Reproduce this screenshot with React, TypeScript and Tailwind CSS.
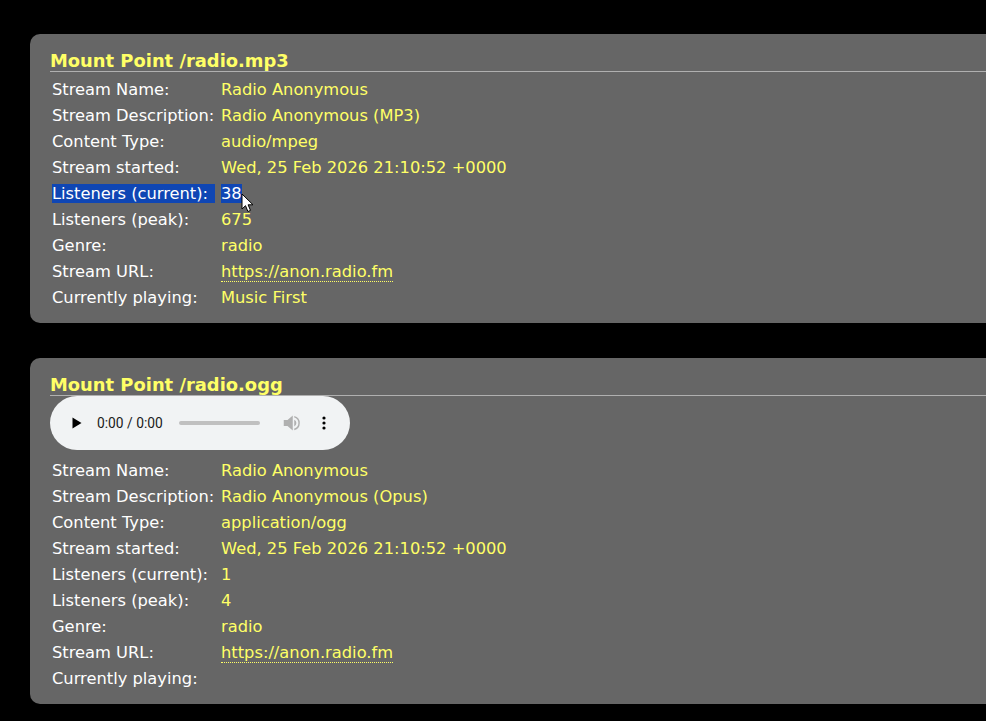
const mp3Rows = [
  ['Stream Name:', 'Radio Anonymous'],
  ['Stream Description:', 'Radio Anonymous (MP3)'],
  ['Content Type:', 'audio/mpeg'],
  ['Stream started:', 'Wed, 25 Feb 2026 21:10:52 +0000'],
  ['Listeners (current):', '38'],
  ['Listeners (peak):', '675'],
  ['Genre:', 'radio'],
  ['Stream URL:', 'https://anon.radio.fm'],
  ['Currently playing:', 'Music First'],
];

const oggRows = [
  ['Stream Name:', 'Radio Anonymous'],
  ['Stream Description:', 'Radio Anonymous (Opus)'],
  ['Content Type:', 'application/ogg'],
  ['Stream started:', 'Wed, 25 Feb 2026 21:10:52 +0000'],
  ['Listeners (current):', '1'],
  ['Listeners (peak):', '4'],
  ['Genre:', 'radio'],
  ['Stream URL:', 'https://anon.radio.fm'],
  ['Currently playing:', ''],
];

function Cursor() {
  return (
    <svg className="absolute left-[20px] top-[9px]" width="14" height="21" viewBox="0 0 14 21">
      <path d="M1 1v15l3.5-3.3 2.4 5.8 2.6-1.1-2.4-5.6H12z" fill="#fff" stroke="#000" strokeWidth="1" />
    </svg>
  );
}

function Row({ label, value, selected }: { label: string; value: string; selected?: boolean }) {
  const isLink = value.startsWith('https');
  return (
    <div className="flex h-[26px] items-center">
      <div className={`ml-[2px] h-[19px] w-[163px] leading-[19px] text-white ${selected ? 'bg-[#0f46b4]' : ''}`}>{label}</div>
      <div className="relative ml-[6px] leading-[19px] text-[#ffff66]">
        {isLink ? (
          <a className="border-b border-dotted border-[#ffff66]">{value}</a>
        ) : (
          <span className={selected ? 'inline-block h-[19px] bg-[#0f46b4] text-white' : ''}>{value}</span>
        )}
        {selected && <Cursor />}
      </div>
    </div>
  );
}

function Player() {
  return (
    <div className="flex h-[54px] w-[300px] items-center rounded-[27px] bg-[#f1f3f4] pl-[20px] text-[#1a1a1a]">
      <svg width="14" height="14" viewBox="0 0 14 14">
        <path d="M2.5 1.5v11l9-5.5z" fill="#000" />
      </svg>
      <span className="ml-[13px] pt-[1px] font-['Roboto',sans-serif] text-[13.8px] leading-none">0:00 / 0:00</span>
      <div className="ml-[16px] h-[4px] w-[81px] rounded-full bg-[#c0c0c0]" />
      <svg className="ml-[23px]" width="18" height="18" viewBox="0 0 24 24">
        <path d="M1 8v8h5l7 6V2L6 8z" fill="#b0b0b0" />
        <path d="M15 7.5a5 5 0 0 1 0 9zM15 2.5v2.2a7.6 7.6 0 0 1 0 14.6v2.2a9.8 9.8 0 0 0 0-19z" fill="#b0b0b0" />
      </svg>
      <svg className="ml-[21px]" width="4" height="14" viewBox="0 0 4 14">
        <circle cx="2" cy="2" r="1.6" fill="#000" />
        <circle cx="2" cy="7" r="1.6" fill="#000" />
        <circle cx="2" cy="12" r="1.6" fill="#000" />
      </svg>
    </div>
  );
}

function Mount({ name, rows, player, selectedRow }: { name: string; rows: string[][]; player?: boolean; selectedRow?: number }) {
  return (
    <section className="ml-[30px] rounded-l-[10px] bg-[#666666] pl-[20px] pb-[13px] pt-[15px]">
      <h3 className="h-[23px] border-b border-[#b0b0b0] text-[17.9px] leading-[24px] font-bold text-[#ffff66]">Mount Point {name}</h3>
      {player ? (
        <div className="mb-[7px]">
          <Player />
        </div>
      ) : (
        <div className="h-[4px]" />
      )}
      {rows.map((r, i) => (
        <Row key={r[0]} label={r[0]} value={r[1]} selected={i === selectedRow} />
      ))}
    </section>
  );
}

export default function App() {
  return (
    <div className="h-[721px] overflow-hidden bg-black pt-[34px] font-['DejaVu_Sans','Verdana',sans-serif] text-[16.3px]">
      <Mount name="/radio.mp3" rows={mp3Rows} selectedRow={4} />
      <div className="h-[35px]" />
      <Mount name="/radio.ogg" rows={oggRows} player />
    </div>
  );
}
